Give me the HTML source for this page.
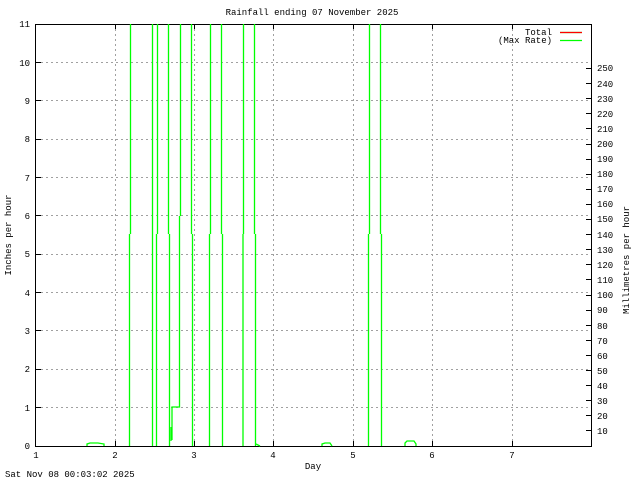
<!DOCTYPE html>
<html><head><meta charset="utf-8"><style>
html,body{margin:0;padding:0;background:#fff;}
svg{display:block;font-family:"Liberation Mono",monospace;font-size:9px;}
</style></head><body>
<svg width="640" height="480" viewBox="0 0 640 480" xmlns="http://www.w3.org/2000/svg">
<rect width="640" height="480" fill="#fff"/>
<g stroke="#a0a0a0" stroke-width="1" stroke-dasharray="2,3" fill="none">
<path d="M36 407.5H591M36 369.5H591M36 330.5H591M36 292.5H591M36 254.5H591M36 215.5H591M36 177.5H591M36 139.5H591M36 100.5H591M36 62.5H591"/>
<path d="M115.5 24V446M194.5 24V446M273.5 24V446M353.5 24V446M432.5 24V446M512.5 24V446"/>
</g>
<g stroke="#000" stroke-width="1" fill="none">
<rect x="35.5" y="24.5" width="556" height="422" />
<path d="M36 407.5h5M36 369.5h5M36 330.5h5M36 292.5h5M36 254.5h5M36 215.5h5M36 177.5h5M36 139.5h5M36 100.5h5M36 62.5h5"/>
<path d="M115.5 446v-5M194.5 446v-5M273.5 446v-5M353.5 446v-5M432.5 446v-5M512.5 446v-5M115.5 24v5M194.5 24v5M273.5 24v5M353.5 24v5M432.5 24v5M512.5 24v5"/>
<path d="M591 430.5h-5M591 415.5h-5M591 400.5h-5M591 385.5h-5M591 370.5h-5M591 355.5h-5M591 340.5h-5M591 325.5h-5M591 310.5h-5M591 295.5h-5M591 279.5h-5M591 264.5h-5M591 249.5h-5M591 234.5h-5M591 219.5h-5M591 204.5h-5M591 189.5h-5M591 174.5h-5M591 159.5h-5M591 144.5h-5M591 128.5h-5M591 113.5h-5M591 98.5h-5M591 83.5h-5M591 68.5h-5"/>
</g>
<g stroke="#00ff00" stroke-width="1.3" fill="none">
<path d="M130.5 24V234M129.5 234V446"/>
<path d="M152.5 24V446"/>
<path d="M157.5 24V234M156.5 234V446"/>
<path d="M168.5 24V234M169.5 234V446"/>
<path d="M180.5 24V216M179.5 216V407H172V440M171 427V441"/>
<path d="M191.5 24V234M192.5 234V446"/>
<path d="M210.5 24V234M209.5 234V446"/>
<path d="M221.5 24V234M222.5 234V446"/>
<path d="M243.5 24V234M243 234V446"/>
<path d="M254.5 24V234M255.5 234V446"/>
<path d="M369.5 24V234M368.5 234V446"/>
<path d="M380.5 24V234M381.5 234V446"/>
<path d="M87 446V444L90 443H98L104 444V446"/>
<path d="M322 446V444L325 443H330L332 446"/>
<path d="M405 446V443L407 441H414L416 444V446"/>
<path d="M256 444L260 446"/>
<path d="M560 32.5H582"/>
</g>
<path d="M560 40.5H582" stroke="#00ff00" stroke-width="1.3"/>
<path d="M560 32.5H582" stroke="#ff0000" stroke-width="1.3"/>
<g fill="#000">
<text x="312" y="15" text-anchor="middle">Rainfall ending 07 November 2025</text>
<text x="552" y="35" text-anchor="end">Total</text>
<text x="552" y="43" text-anchor="end">(Max Rate)</text>
<g text-anchor="end">
<text x="30" y="449">0</text><text x="30" y="411">1</text><text x="30" y="372">2</text><text x="30" y="334">3</text><text x="30" y="296">4</text><text x="30" y="257">5</text><text x="30" y="219">6</text><text x="30" y="181">7</text><text x="30" y="142">8</text><text x="30" y="104">9</text><text x="30" y="66">10</text><text x="30" y="27">11</text>
</g>
<g text-anchor="middle">
<text x="36" y="458">1</text><text x="115" y="458">2</text><text x="194" y="458">3</text><text x="273" y="458">4</text><text x="353" y="458">5</text><text x="432" y="458">6</text><text x="512" y="458">7</text>
<text x="313" y="469">Day</text>
</g>
<g>
<text x="597" y="434">10</text><text x="597" y="419">20</text><text x="597" y="404">30</text><text x="597" y="389">40</text><text x="597" y="374">50</text><text x="597" y="359">60</text><text x="597" y="344">70</text><text x="597" y="329">80</text><text x="597" y="313">90</text><text x="597" y="298">100</text><text x="597" y="283">110</text><text x="597" y="268">120</text><text x="597" y="253">130</text><text x="597" y="238">140</text><text x="597" y="222">150</text><text x="597" y="207">160</text><text x="597" y="192">170</text><text x="597" y="177">180</text><text x="597" y="162">190</text><text x="597" y="147">200</text><text x="597" y="132">210</text><text x="597" y="117">220</text><text x="597" y="102">230</text><text x="597" y="87">240</text><text x="597" y="71">250</text>
</g>
<text transform="translate(11 235) rotate(-90)" text-anchor="middle">Inches per hour</text>
<text transform="translate(629 260) rotate(-90)" text-anchor="middle">Millimetres per hour</text>
<text x="5" y="477">Sat Nov 08 00:03:02 2025</text>
</g>
</svg>
</body></html>
